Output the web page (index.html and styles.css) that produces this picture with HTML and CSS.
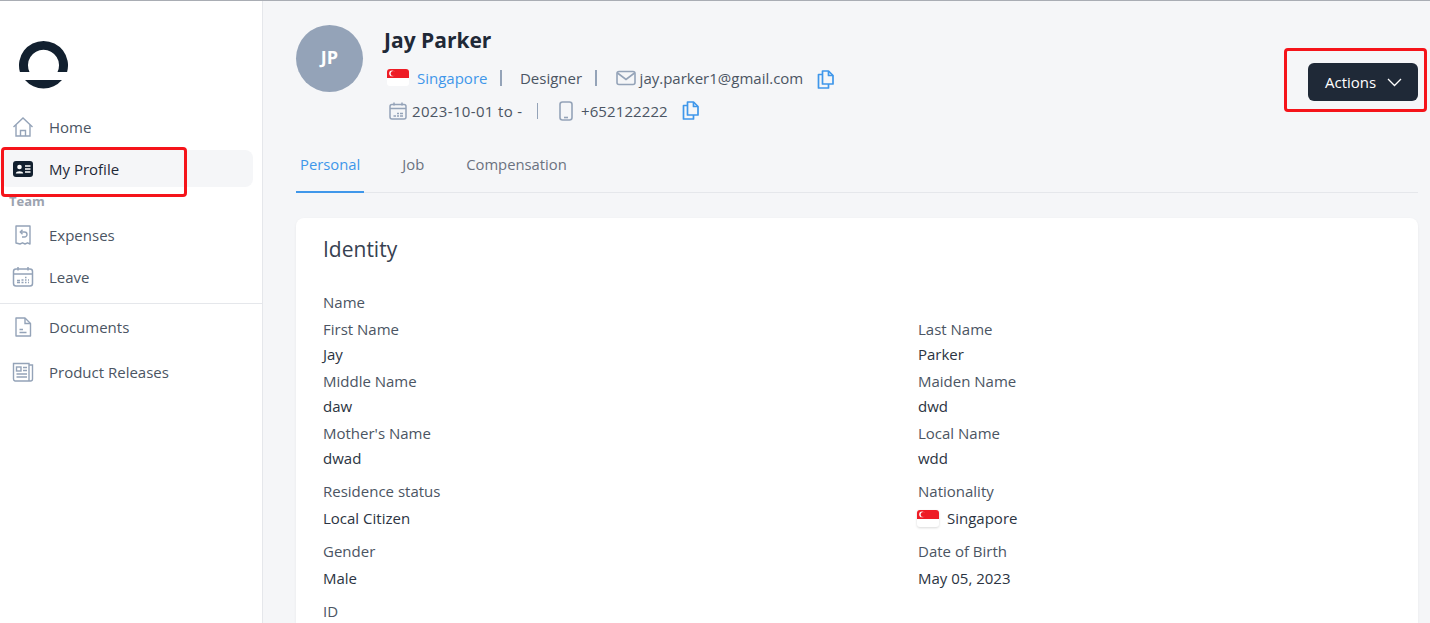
FILE: index.html
```html
<!DOCTYPE html>
<html lang="en">
<head>
    <meta charset="UTF-8">
    <meta name="viewport" content="width=device-width, initial-scale=1.0">
    <title>My Profile</title>
    <link rel="stylesheet" href="styles.css">
</head>
<body>
    <aside class="sidebar">
        <svg class="logo" width="50" height="50" viewBox="0 0 50 50">
            <path d="M1.9 32 A24.5 24.5 0 1 1 49.1 32 L39.5 32 A15.5 15.5 0 1 0 11.5 32 Z" fill="#12202f"/>
            <path d="M7 40 L44 40 A24.5 24.5 0 0 1 7 40 Z" fill="#12202f"/>
        </svg>
        <a class="nav-item nav-home">
            <svg class="nav-icon" viewBox="0 0 22 22" fill="none" stroke="#94a3b8" stroke-width="1.4"><path d="M1.5 11 L11 2 L20.5 11"/><path d="M4 9 V20 H18 V9"/><path d="M8.5 20 V14.5 H13.5 V20"/></svg>
            Home
        </a>
        <a class="nav-item nav-active">
            <svg class="nav-icon" viewBox="0 0 22 22"><rect x="1" y="3" width="20" height="16" rx="3" fill="#12202f"/><circle cx="7.5" cy="9" r="2.3" fill="#fff"/><path d="M3.8 15.5 C3.8 12.5 11.2 12.5 11.2 15.5 Z" fill="#fff"/><path d="M13 8 H18.5 M13 11 H18.5 M13 14 H18.5" stroke="#fff" stroke-width="1.4"/></svg>
            My Profile
        </a>
        <div class="nav-label">Team</div>
        <a class="nav-item nav-expenses">
            <svg class="nav-icon" viewBox="0 0 22 22" fill="none" stroke="#94a3b8" stroke-width="1.4"><path d="M4 2 H18 V20 L15.5 18.8 L13 20 L10.5 18.8 L8 20 L4 19 Z" stroke-linejoin="round"/><path d="M8.5 8 H12.5 A2.5 2.5 0 0 1 12.5 13 H10"/><path d="M10.5 5.8 L8.3 8 L10.5 10.2"/></svg>
            Expenses
        </a>
        <a class="nav-item nav-leave">
            <svg class="nav-icon" viewBox="0 0 22 22" fill="none" stroke="#94a3b8" stroke-width="1.5"><rect x="1.5" y="3" width="19" height="17" rx="2.5"/><path d="M1.5 8 H20.5 M6 1 V4.5 M16 1 V4.5"/><path d="M5 16.5 H8 M9.5 16.5 H11.5 M13 16.5 H14.5 M16 16.5 H17 M5 14.5 H8 M9.5 14 H11.5 M13 14 H14.5 M16 14 H17 M13 11.5 H14.5" stroke-width="1.5"/></svg>
            Leave
        </a>
        <div class="nav-divider"></div>
        <a class="nav-item nav-documents">
            <svg class="nav-icon" viewBox="0 0 22 22" fill="none" stroke="#94a3b8" stroke-width="1.4"><path d="M4 2 H13 L18.5 7.5 V20 H4 Z" stroke-linejoin="round"/><path d="M13 2 V7.5 H18.5 M7.5 16.5 H14.5 M7.5 13.5 H11"/></svg>
            Documents
        </a>
        <a class="nav-item nav-releases">
            <svg class="nav-icon" viewBox="0 0 22 22" fill="none" stroke="#94a3b8" stroke-width="1.4"><path d="M17 4 H20.5 V18 A2 2 0 0 1 18.5 20 H3 A2 2 0 0 1 1.5 18 V2.5 H17 V20"/><rect x="4.5" y="6" width="4.5" height="4"/><path d="M11 6.5 H15 M11 9.5 H15 M4.5 13 H15 M4.5 16 H15"/></svg>
            Product Releases
        </a>
    </aside>

    <main class="content">
        <header class="profile-head">
            <div class="avatar">JP</div>
            <div class="profile-info">
                <h1 class="profile-name">Jay Parker</h1>
                <div class="info-row info-row-first">
                    <svg class="flag" width="22" height="17" viewBox="0 0 22 17"><rect width="22" height="17" rx="3" fill="#fff"/><path d="M0 9 V3 A3 3 0 0 1 3 0 H19 A3 3 0 0 1 22 3 V9 Z" fill="#ee1c25"/><circle cx="5" cy="4.4" r="2.8" fill="#fff"/><circle cx="6.2" cy="4.4" r="2.5" fill="#ee1c25"/></svg>
                    <span class="link">Singapore</span>
                    <span class="sep sep-a"></span>
                    <span>Designer</span>
                    <span class="sep sep-b"></span>
                    <svg class="row-icon" width="20" height="16" viewBox="0 0 20 16" fill="none" stroke="#94a3b8" stroke-width="1.6"><rect x="1" y="1.5" width="18" height="13" rx="2"/><path d="M1.5 3 L10 9.5 L18.5 3"/></svg>
                    <span class="email">jay.parker1@gmail.com</span>
                    <svg class="copy" width="17" height="19" viewBox="0 0 17 19" fill="none" stroke="#3f97ea" stroke-width="1.7" stroke-linejoin="round"><path d="M5.5 1 H11.5 L16 5.5 V14 H5.5 Z"/><path d="M11.5 1 V5.5 H16"/><path d="M5.5 4.5 H1.5 V18 H11.5 V14"/></svg>
                </div>
                <div class="info-row info-row-second">
                    <svg class="row-icon" width="18" height="18" viewBox="0 0 18 18" fill="none" stroke="#94a3b8" stroke-width="1.5"><rect x="1" y="2.5" width="16" height="14.5" rx="2"/><path d="M1 6.5 H17 M5 0.5 V3.5 M13 0.5 V3.5"/><path d="M4.5 14 H7 M8 14 H10 M11 14 H14 M8 11.5 H10 M11 11.5 H14" stroke-width="1.4"/></svg>
                    <span class="dates">2023-10-01 to -</span>
                    <span class="sep sep-c"></span>
                    <svg class="phone" width="14" height="20" viewBox="0 0 14 20" fill="none" stroke="#94a3b8" stroke-width="1.6"><rect x="1" y="1" width="12" height="18" rx="2.5"/><path d="M5 16.5 H9"/></svg>
                    <span class="phone-num">+652122222</span>
                    <svg class="copy" width="17" height="19" viewBox="0 0 17 19" fill="none" stroke="#3f97ea" stroke-width="1.7" stroke-linejoin="round"><path d="M5.5 1 H11.5 L16 5.5 V14 H5.5 Z"/><path d="M11.5 1 V5.5 H16"/><path d="M5.5 4.5 H1.5 V18 H11.5 V14"/></svg>
                </div>
            </div>
            <button class="actions-btn">Actions
                <svg width="15" height="9" viewBox="0 0 15 9" fill="none" stroke="#fff" stroke-width="1.3"><path d="M1 1 L7.5 7.5 L14 1"/></svg>
            </button>
        </header>

        <nav class="tabs">
            <a class="tab tab-active">Personal</a>
            <a class="tab">Job</a>
            <a class="tab">Compensation</a>
        </nav>

        <section class="card">
            <h2 class="card-title">Identity</h2>
            <div class="group-title">Name</div>
            <div class="fields">
                <div class="field"><div class="field-label">First Name</div><div class="field-value">Jay</div></div>
                <div class="field"><div class="field-label">Last Name</div><div class="field-value">Parker</div></div>
                <div class="field"><div class="field-label">Middle Name</div><div class="field-value">daw</div></div>
                <div class="field"><div class="field-label">Maiden Name</div><div class="field-value">dwd</div></div>
                <div class="field"><div class="field-label">Mother's Name</div><div class="field-value">dwad</div></div>
                <div class="field"><div class="field-label">Local Name</div><div class="field-value">wdd</div></div>
            </div>
            <div class="fields fields-loose">
                <div class="field"><div class="field-label">Residence status</div><div class="field-value">Local Citizen</div></div>
                <div class="field"><div class="field-label">Nationality</div><div class="field-value field-flag">
                    <svg class="flag flag-shadow" width="22" height="17" viewBox="0 0 22 17"><rect width="22" height="17" rx="3" fill="#fff"/><path d="M0 9 V3 A3 3 0 0 1 3 0 H19 A3 3 0 0 1 22 3 V9 Z" fill="#ee1c25"/><circle cx="5" cy="4.4" r="2.8" fill="#fff"/><circle cx="6.2" cy="4.4" r="2.5" fill="#ee1c25"/></svg>
                    Singapore</div></div>
                <div class="field"><div class="field-label">Gender</div><div class="field-value">Male</div></div>
                <div class="field"><div class="field-label">Date of Birth</div><div class="field-value">May 05, 2023</div></div>
            </div>
            <div class="group-title">ID</div>
        </section>
    </main>

    <!-- red annotation boxes drawn over the screenshot -->
    <div class="mark mark-profile"></div>
    <div class="mark mark-actions"></div>
</body>
</html>
```

FILE: styles.css
```css
* {
    box-sizing: border-box;
}

html, body {
    height: 100%;
}

body {
    margin: 0;
    display: flex;
    overflow: hidden;
    border-top: 1px solid #a9adb4;
    background-color: #f5f6f8;
    color: #1f2937;
    font-family: "Open Sans", sans-serif;
    font-size: 15px;
    position: relative;
}

/* Sidebar */
.sidebar {
    width: 263px;
    flex-shrink: 0;
    background-color: #fff;
    border-right: 1px solid #e5e7eb;
    padding: 39px 9px 0 0;
}

.logo {
    display: block;
    margin-left: 18px;
}

.nav-item {
    display: flex;
    align-items: center;
    gap: 15px;
    padding-left: 12px;
    height: 37px;
    color: #4b5563;
    border-radius: 8px;
}

.nav-icon {
    width: 22px;
    height: 22px;
    flex-shrink: 0;
}

.nav-home {
    margin-top: 18px;
}

.nav-active {
    margin-top: 5px;
    color: #1f2937;
    background-color: #f5f6f8;
}

.nav-label {
    height: 14px;
    line-height: 14px;
    margin: 7px 0 0 9px;
    font-size: 13px;
    font-weight: 700;
    color: #9ca3af;
}

.nav-expenses {
    margin-top: 8px;
}

.nav-leave {
    margin-top: 5px;
}

.nav-divider {
    height: 1px;
    margin: 8px -9px 4px 0;
    background-color: #e5e7eb;
}

.nav-releases {
    margin-top: 8px;
}

/* Main area */
.content {
    flex: 1;
    display: flex;
    flex-direction: column;
    padding: 24px 12px 0 33px;
}

.profile-head {
    display: flex;
    height: 139px;
    flex-shrink: 0;
}

.avatar {
    width: 67px;
    height: 67px;
    border-radius: 50%;
    background-color: #94a3b8;
    color: #fff;
    font-size: 18px;
    font-weight: 700;
    display: flex;
    align-items: center;
    justify-content: center;
    flex-shrink: 0;
    padding-bottom: 4px;
}

.profile-info {
    flex: 1;
    margin-left: 21px;
}

.profile-name {
    margin: 1px 0 0;
    font-size: 21px;
    font-weight: 700;
    line-height: 29px;
}

.info-row {
    display: flex;
    align-items: center;
    color: #4b5563;
    height: 33px;
}

.info-row-first {
    margin-top: 6px;
    padding-left: 3px;
}

.info-row-second {
    padding-left: 5px;
}

.flag-shadow {
    margin-left: -1px;
    filter: drop-shadow(0 1px 1px rgba(0, 0, 0, 0.15));
}

.link {
    color: #3f97ea;
    margin-left: 8px;
}

.sep {
    width: 1.5px;
    height: 16px;
    background-color: #94a3b8;
}

.sep-a {
    margin: 0 18px 0 13px;
}

.sep-b {
    margin: 0 19px 0 13px;
}

.sep-c {
    margin: 0 21px 0 14px;
}

.email {
    margin-left: 4px;
}

.info-row-first .copy {
    margin-top: 3px;
}

.copy {
    margin-left: 14px;
}

.dates {
    margin-left: 5px;
    letter-spacing: 0.35px;
}

.phone {
    margin-right: 8px;
}

.phone-num {
    letter-spacing: 0.1px;
}

.actions-btn {
    align-self: flex-start;
    display: flex;
    align-items: center;
    gap: 11px;
    margin-top: 38px;
    width: 110px;
    height: 38px;
    padding: 0 0 0 17px;
    border: none;
    border-radius: 6px;
    background-color: #1f2937;
    color: #fff;
    font-family: inherit;
    font-size: 15px;
}

/* Tabs */
.tabs {
    display: flex;
    height: 29px;
    flex-shrink: 0;
    border-bottom: 1px solid #e5e7eb;
    font-size: 14.8px;
}

.tab {
    color: #6b7280;
    padding: 0 4px;
    margin-right: 34px;
    height: 29px;
    line-height: 0;
}

.tab-active {
    color: #3f97ea;
    border-bottom: 2px solid #3f97ea;
}

/* Card runs on below the fold, so it fills what is left of the window */
.card {
    flex: 1;
    min-height: 0;
    margin-top: 25px;
    background-color: #fff;
    border-radius: 8px 8px 0 0;
    padding: 16px 27px 0;
    box-shadow: 0 1px 3px rgba(0, 0, 0, 0.06);
}

.card-title {
    margin: 0;
    font-size: 21px;
    font-weight: 400;
    line-height: 31px;
    color: #374151;
}

.group-title {
    color: #4b5563;
    line-height: 20px;
    margin-top: 27px;
}

.fields {
    display: grid;
    grid-template-columns: 595px 1fr;
    margin-top: 7px;
}

.fields-loose {
    margin-top: 6px;
}

.field {
    height: 52px;
}

.field-label {
    color: #4b5563;
    line-height: 20px;
}

.field-value {
    color: #2b3442;
    line-height: 20px;
    margin-top: 5px;
}

.fields-loose .field {
    height: 60px;
}

.fields-loose .field-value {
    margin-top: 7px;
}

.field-flag {
    display: flex;
    align-items: center;
    gap: 8px;
}

.fields-loose + .group-title {
    margin-top: 0;
}

/* Annotation boxes */
.mark {
    position: absolute;
    border: 3px solid #f5141a;
    border-radius: 4px;
}

.mark-profile {
    left: 1px;
    top: 146px;
    width: 186px;
    height: 50px;
}

.mark-actions {
    left: 1284px;
    top: 47px;
    width: 143px;
    height: 64px;
}
```
